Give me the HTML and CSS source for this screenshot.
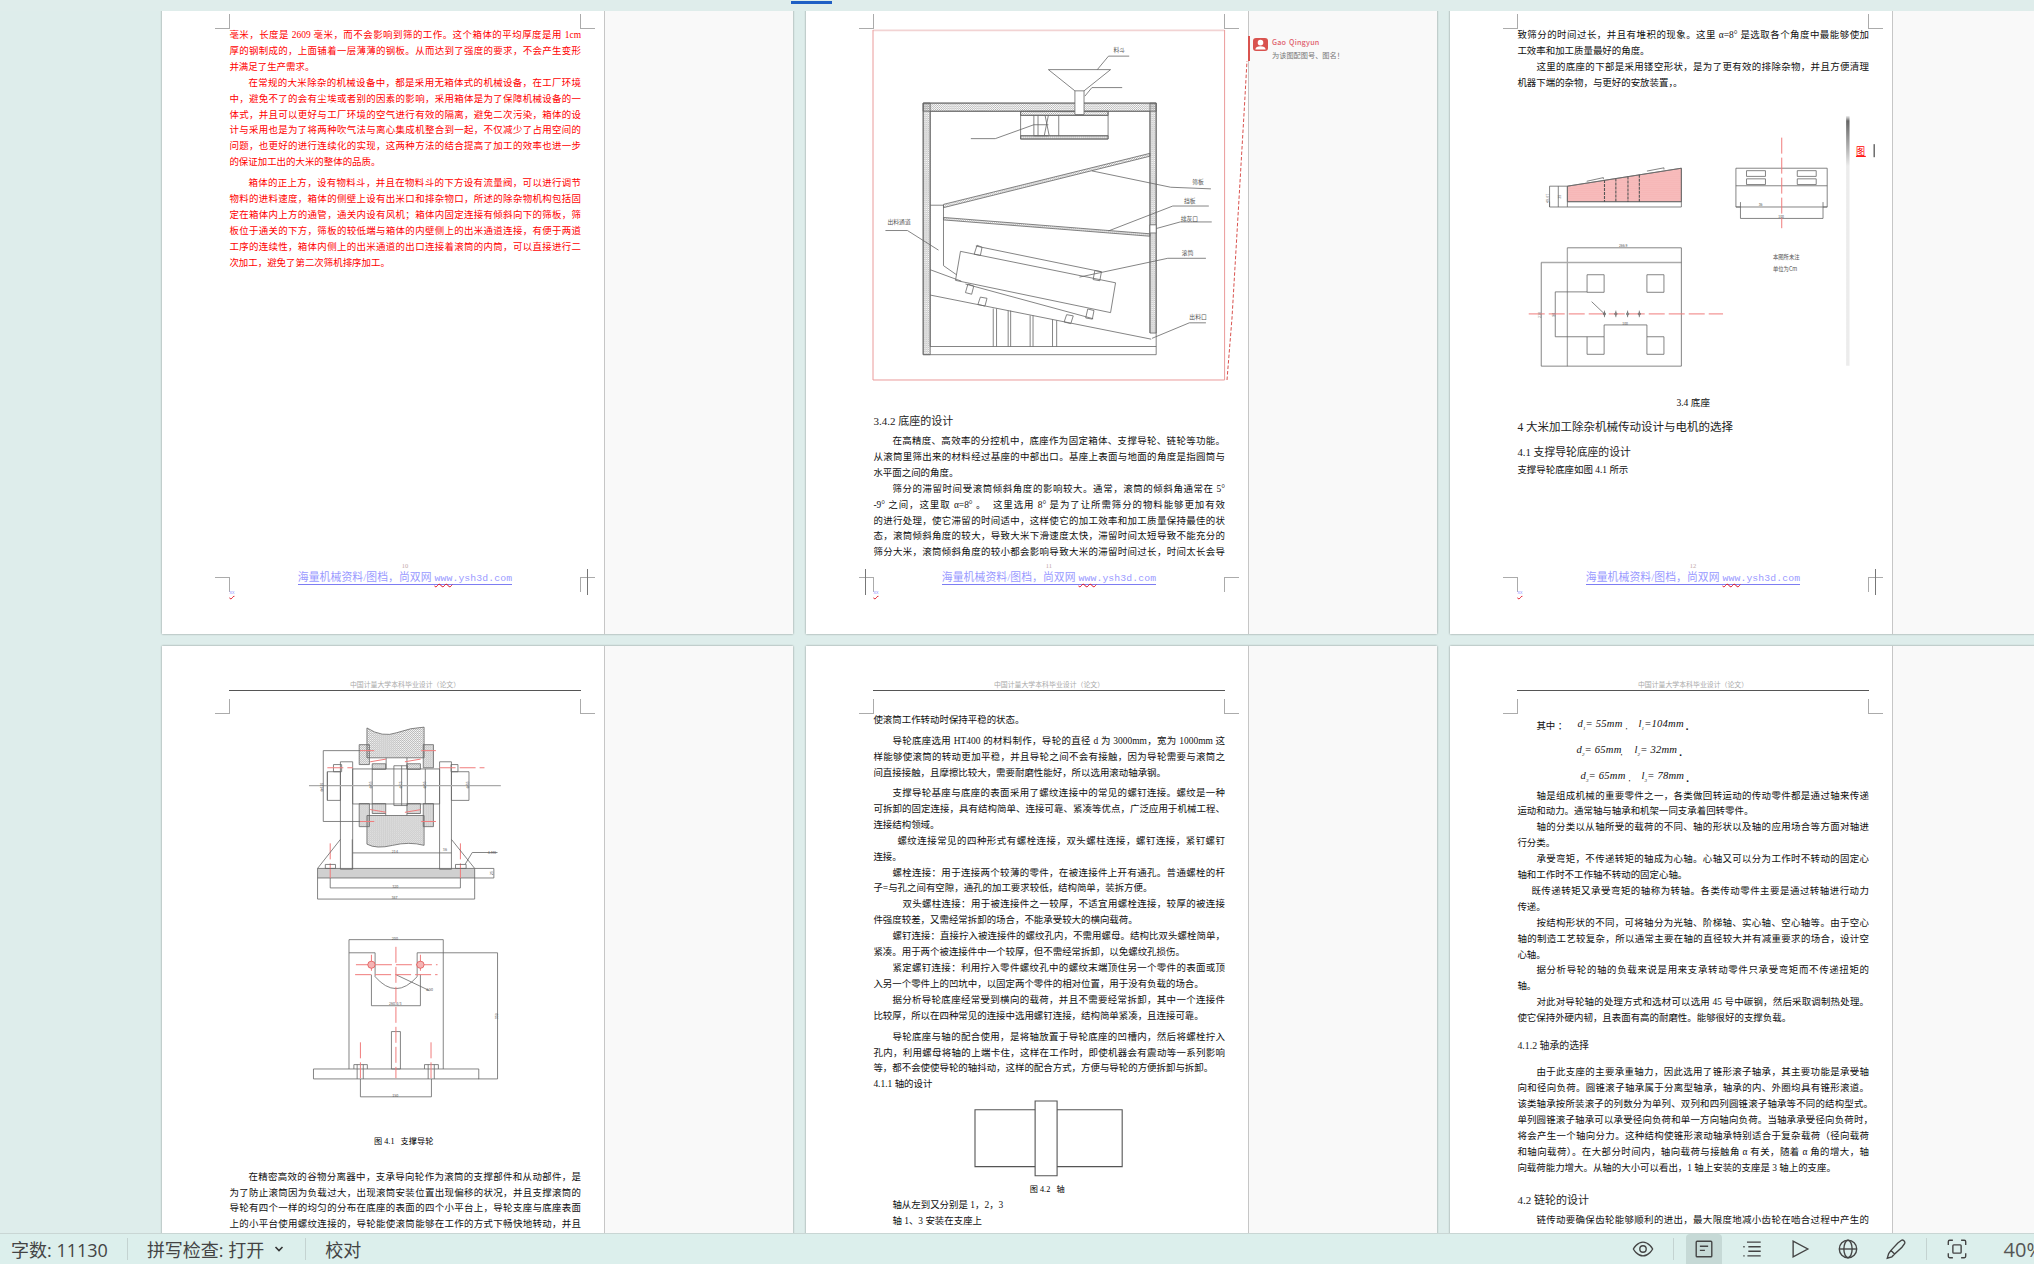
FILE: index.html
```html
<!DOCTYPE html>
<html lang="zh-CN">
<head>
<meta charset="utf-8">
<title>文档</title>
<link rel="stylesheet" href="styles.css">
</head>
<body>
<div class="topbar"><span class="tab-mark"></span></div>
<main class="doc">
<div class="pages">

<!-- PAGE 10 -->
<section class="page">
  <div class="sheet">
    <span class="crop tl"></span><span class="crop tr"></span><span class="crop bl"></span><span class="crop br"></span>
    <span class="caret right"></span>
    <header class="head"></header>
    <div class="body red">
      <p class="para cont"><span class="ln">毫米，长度是 2609 毫米，而不会影响到筛的工作。这个箱体的平均厚度是用 1cm</span><span class="ln">厚的钢制成的，上面铺着一层薄薄的钢板。从而达到了强度的要求，不会产生变形</span><span class="ln">并满足了生产需求。</span></p>
      <p class="para"><span class="ln">在常规的大米除杂的机械设备中，都是采用无箱体式的机械设备，在工厂环境</span><span class="ln">中，避免不了的会有尘埃或者别的因素的影响，采用箱体是为了保障机械设备的一</span><span class="ln">体式，并且可以更好与工厂环境的空气进行有效的隔离，避免二次污染，箱体的设</span><span class="ln">计与采用也是为了将两种吹气法与离心集成机整合到一起，不仅减少了占用空间的</span><span class="ln">问题，也更好的进行连续化的实现，这两种方法的结合提高了加工的效率也进一步</span><span class="ln">的保证加工出的大米的整体的品质。</span></p>
      <p class="para gap5"><span class="ln">箱体的正上方，设有物料斗，并且在物料斗的下方设有流量阀，可以进行调节</span><span class="ln">物料的进料速度，箱体的侧壁上设有出米口和排杂物口，所述的除杂物机构包括固</span><span class="ln">定在箱体内上方的通管，通关内设有风机；箱体内固定连接有倾斜向下的筛板，筛</span><span class="ln">板位于通关的下方，筛板的较低端与箱体的内壁侧上的出米通道连接，有便于两道</span><span class="ln">工序的连续性，箱体内侧上的出米通道的出口连接着滚筒的内筒，可以直接进行二</span><span class="ln">次加工，避免了第二次筛机排序加工。</span></p>
    </div>
    <footer class="foot"><span class="pno">10</span><a class="promo">海量机械资料/图档，尚双网 <span class="promo-url"><span class="wavy">www</span>.ysh3d.com</span></a><span class="mark">xx</span></footer>
  </div>
  <aside class="pane"></aside>
</section>

<!-- PAGE 11 -->
<section class="page">
  <div class="sheet">
    <span class="crop tl"></span><span class="crop tr"></span><span class="crop bl"></span><span class="crop br"></span>
    <span class="caret left"></span>
    <header class="head"></header>
    <div class="body">
      <svg class="drawing fig-machine" viewBox="177 73 848 857" preserveAspectRatio="none">
        <defs><pattern id="hm" width="5" height="5" patternUnits="userSpaceOnUse"><path d="M0 5L5 0M0 0L5 5" stroke="#777"/></pattern></defs>
        <path class="sel-t" d="M177 74H1025"/><path class="sel" d="M177 73V930H1025V73"/>
        <g fill="url(#hm)"><rect x="298" y="252" width="17" height="616"/><rect x="845" y="252" width="15" height="563"/><rect x="298" y="252" width="562" height="20"/><rect x="533" y="272" width="211" height="10"/><rect x="533" y="332" width="211" height="8"/><path d="M347 500L845 375V382L347 508Z"/><path d="M347 532L845 572V578L347 538Z"/></g>
        <path d="M298 252H860V815M298 252V868H860V815M315 272V848M845 272V815M315 272H664M686 272H845M315 848H860"/>
        <path d="M533 272V340H744V272M533 282H744M533 332H744M565 282V332M575 282V332M625 282V332M600 282L590 332M592 282L602 332M565 305H600M565 332H600"/>
        <path class="white" d="M600 170H750L686 222V280H664V222Z"/>
        <path d="M664 222H686M718 170L745 137H795M688 235L705 214H778M413 339H472L565 305"/>
        <path d="M705 418L895 458L992 462M745 565L900 504H987M850 562L918 543H994"/>
        <path class="white" d="M845 550H860V570H845Z"/>
        <path d="M315 502H347V650L392 682M207 564H260L335 612"/>
        <path class="white" d="M388 615L762 692L750 765L376 686Z"/>
        <path d="M425 602L728 665M400 695L708 780M428 600L421 622L436 625L440 605ZM712 662L708 684L724 687L728 665ZM406 695L400 716L415 720L420 700ZM695 756L690 778L706 781L710 760ZM436 727L430 745L447 749L452 730ZM644 770L638 788L654 792L660 773Z"/>
        <path d="M675 678L888 632H980M315 660L390 688M315 722L848 830M850 828L940 790H980M467 755V848M475 755V848M503 760V848M509 760V848M556 772V848M563 772V848M610 782V848M620 784V848"/>
        <text class="lbl" x="757" y="127">料斗</text><text class="lbl" x="947" y="450">筛板</text><text class="lbl" x="927" y="497">挡板</text><text class="lbl" x="919" y="540">排灰口</text><text class="lbl" x="212" y="547">出料通道</text><text class="lbl" x="922" y="624">滚筒</text><text class="lbl" x="940" y="780">出料口</text>
      </svg>
      <h4 class="h-sm fig-after">3.4.2 底座的设计</h4>
      <p class="para gap-h"><span class="ln">在高精度、高效率的分控机中，底座作为固定箱体、支撑导轮、链轮等功能。</span><span class="ln">从滚筒里筛出来的材料经过基座的中部出口。基座上表面与地面的角度是指圆筒与</span><span class="ln">水平面之间的角度。</span></p>
      <p class="para cut"><span class="ln">筛分的滞留时间受滚筒倾斜角度的影响较大。通常，滚筒的倾斜角通常在 5°</span><span class="ln">-9° 之间，这里取 α=8° 。&nbsp; 这里选用 8° 是为了让所需筛分的物料能够更加有效</span><span class="ln">的进行处理，使它滞留的时间适中，这样使它的加工效率和加工质量保持最佳的状</span><span class="ln">态，滚筒倾斜角度的较大，导致大米下滑速度太快，滞留时间太短导致不能充分的</span><span class="ln">筛分大米，滚筒倾斜角度的较小都会影响导致大米的滞留时间过长，时间太长会导</span></p>
    </div>
    <footer class="foot"><span class="pno">11</span><a class="promo">海量机械资料/图档，尚双网 <span class="promo-url"><span class="wavy">www</span>.ysh3d.com</span></a><span class="mark">xx</span></footer>
    <svg class="leader" viewBox="0 0 30 330"><path d="M6 324L11 262L12 245L17 160L23 58L26 5"/></svg>
  </div>
  <aside class="pane">
    <div class="comment">
      <span class="avatar"><svg viewBox="0 0 16 14"><circle cx="8" cy="5" r="3"/><path d="M2.5 12.5c0-2.6 2.4-3.6 5.5-3.6s5.500 1 5.500 3.600z"/></svg></span>
      <div class="c-text"><b>Gao Qingyun</b><span>为该图配图号、图名！</span></div>
    </div>
  </aside>
</section>

<!-- PAGE 12 -->
<section class="page">
  <div class="sheet">
    <span class="crop tl"></span><span class="crop tr"></span><span class="crop bl"></span><span class="crop br"></span>
    <span class="caret right"></span>
    <header class="head"></header>
    <div class="body">
      <p class="para cont"><span class="ln">致筛分的时间过长，并且有堆积的现象。这里 α=8° 是选取各个角度中最能够使加</span><span class="ln">工效率和加工质量最好的角度。</span></p>
      <p class="para"><span class="ln">这里的底座的下部是采用镂空形状，是为了更有效的排除杂物，并且方便清理</span><span class="ln">机器下端的杂物，与更好的安放装置，。</span></p>
      <svg class="drawing fig-base" viewBox="204 285 960 620" preserveAspectRatio="none">
        <defs>
          <pattern id="hr" width="5" height="5" patternUnits="userSpaceOnUse"><path class="hatch-red" d="M0 5L5 0M0 0L5 5" stroke="#ea5a5a"/></pattern>
          <linearGradient id="sb" x1="0" y1="0" x2="0" y2="1"><stop offset="0" stop-color="#eee"/><stop offset=".02" stop-color="#666"/><stop offset=".14" stop-color="#bbb"/><stop offset=".2" stop-color="#ececec"/><stop offset="1" stop-color="#ececec"/></linearGradient>
        </defs>
        <path fill="url(#hr)" d="M337 457L638 413V495H337Z"/>
        <path d="M290 457H337L638 413V508H290ZM290 495V508M313 457V508M337 457V508M337 495H638M388 445L432 436V440M547 420L592 412V416"/>
        <path class="dark" d="M435 442V496M465 438V496M497 433V496M527 429V496"/>
        <text class="tiny rot" transform="translate(288 498) rotate(-90)">48.07</text><text class="tiny rot" transform="translate(319 488) rotate(-90)">35</text>
        <path d="M782 413H1023V508H782ZM782 456H1023M794 496V536H1012V496M782 508H794M1012 508H1023"/>
        <rect x="810" y="419" width="50" height="14"/><rect x="810" y="439" width="50" height="14"/><rect x="944" y="419" width="50" height="14"/><rect x="944" y="439" width="50" height="14"/>
        <path class="cl" d="M903 338V560"/>
        <text class="tiny" x="842" y="506">36</text><text class="tiny" x="894" y="536">100</text>
        <path class="thick" d="M268 644H638M337 608V898"/>
        <path d="M268 644V898H638V608H337M389 674H434V717H389ZM547 674H592V717H547ZM389 826H434V869H389ZM547 826H592V869H547ZM389 716H305V826H389M434 826V797H547V826"/>
        <path class="cl" d="M235 770H748"/>
        <path d="M401 740L435 770M435 762V778M465 762V778M496 762V778M527 762V778"/>
        <circle cx="435" cy="770" r="3"/><circle cx="465" cy="770" r="3"/><circle cx="496" cy="770" r="3"/><circle cx="527" cy="770" r="3"/>
        <text class="tiny" x="473" y="607">266.9</text><text class="tiny" x="482" y="796">100</text><text class="tiny rot" transform="translate(268 780) rotate(-90)">210</text><text class="tiny rot" transform="translate(304 777) rotate(-90)">80</text>
        <text class="lbl" x="880" y="635">本图所未注</text><text class="lbl" x="880" y="665">单位为Cm</text>
        <rect class="rail" x="1073" y="285" width="9" height="612" fill="url(#sb)"/>
        <text class="red-glyph" x="1099" y="380">图</text><path class="redline" d="M1099 384H1125"/><path class="black" d="M1147 354V386"/>
      </svg>
      <p class="cap-34">3.4 底座</p>
      <h2 class="h-lg">4 大米加工除杂机械传动设计与电机的选择</h2>
      <h3 class="h-md">4.1 支撑导轮底座的设计</h3>
      <p class="para cont gap-2"><span class="ln">支撑导轮底座如图 4.1 所示</span></p>
    </div>
    <footer class="foot"><span class="pno">12</span><a class="promo">海量机械资料/图档，尚双网 <span class="promo-url"><span class="wavy">www</span>.ysh3d.com</span></a><span class="mark">xx</span></footer>
  </div>
  <aside class="pane"></aside>
</section>

<!-- PAGE 13 -->
<section class="page">
  <div class="sheet">
    <span class="crop tl"></span><span class="crop tr"></span><span class="crop bl"></span><span class="crop br"></span>
    <header class="head"><span>中国计量大学本科毕业设计（论文）</span></header>
    <div class="body">
      <svg class="drawing fig-roller" viewBox="169 200 862 960" preserveAspectRatio="none">
        <defs><pattern id="hg" width="5" height="5" patternUnits="userSpaceOnUse"><path class="hatch-dark" d="M0 5L5 0" stroke="#555"/></pattern>
        <pattern id="hd" width="4" height="4" patternUnits="userSpaceOnUse"><path d="M0 4L4 0M0 0L4 4" stroke="#777"/></pattern></defs>
        <g fill="url(#hg)">
          <path d="M507 220Q545 245 580 232T647 218V295H507Z"/><path d="M507 440H647V515Q610 505 570 515T507 512Z"/>
          <rect x="488" y="262" width="25" height="50"/><rect x="645" y="262" width="25" height="58"/><rect x="488" y="410" width="25" height="58"/><rect x="645" y="410" width="25" height="58"/>
          <rect x="520" y="310" width="33" height="14"/><rect x="605" y="310" width="33" height="14"/><rect x="520" y="410" width="33" height="25"/><rect x="605" y="410" width="33" height="25"/>
        </g>
        <rect fill="url(#hd)" x="386" y="573" width="385" height="24"/>
        <path d="M472 323H685V411H472ZM520 323V411M650 323V411M573 315H606V415H573ZM592 315V415M442 305H472V575H442ZM685 305H714V575H685ZM410 330H442V402H410ZM714 330H757V402H714ZM425 312H445V330H425ZM713 312H730V330H713ZM554 295V323M605 295V323M553 435V440M605 435V440"/>
        <path class="thick" d="M365 365H835"/>
        <path class="cl" d="M490 277H525M640 277H676M490 455H525M640 455H676M410 320H472M685 320H795M515 305L555 298M600 305L640 298M515 425L555 432M600 432L640 425M417 510V597M736 510V597"/>
        <path d="M400 277H490M400 277V455H490M410 330V402M442 500L386 573M714 500L771 573M472 534H685M685 534H714M471 500V575M417 597V622H736V597M386 597V650H771V597M771 573H818M771 597H818M818 573V597M748 562L765 533H827M405 563H430V573H405ZM724 563H750V573H724Z"/>
        <text class="tiny" x="568" y="534">214</text><text class="tiny" x="693" y="530">36</text><text class="tiny" x="803" y="536">4-M8</text><text class="tiny" x="569" y="622">320</text><text class="tiny" x="567" y="651">387</text>
        <text class="tiny rot" transform="translate(400 380) rotate(-90)">Φ410</text><text class="tiny rot" transform="translate(519 372) rotate(-90)">Φ65</text><text class="tiny rot" transform="translate(592 372) rotate(-90)">Φ75</text><text class="tiny rot" transform="translate(652 372) rotate(-90)">Φ65</text><text class="tiny rot" transform="translate(756 372) rotate(-90)">Φ55</text><text class="tiny rot" transform="translate(817 590) rotate(-90)">25</text>
        <path d="M463 1077V752H694V1077M463 785H527V845Q578 905 630 845V785H827V1102H780M518 840V918H638V840M376 1077H781V1102H376ZM567 983H589V1077H567ZM475 1077V1066H508V1077M648 1077V1066H682V1077M483 1066V1102M498 1066V1102M657 1066V1102M672 1066V1102M491 1102V1147H665V1102M578 840L660 880"/>
        <path class="cl" d="M578 770V1100M480 815H680M478 840H680M491 1010V1100M664 1010V1100M518 790V835M638 790V835"/>
        <circle class="bolt" cx="518" cy="815" r="9"/><circle class="bolt" cx="638" cy="815" r="9"/>
        <text class="tiny" x="568" y="752">200</text><text class="tiny" x="652" y="882">Φ50</text><text class="tiny" x="561" y="917">260.4/3</text><text class="tiny" x="569" y="1148">150</text><text class="tiny rot" transform="translate(827 952) rotate(-90)">350</text>
      </svg>
      <p class="cap cap-41">图 4.1 &nbsp;&nbsp;支撑导轮</p>
      <p class="para cut gap-28"><span class="ln">在精密高效的谷物分离器中，支承导向轮作为滚筒的支撑部件和从动部件，是</span><span class="ln">为了防止滚筒因为负载过大，出现滚筒安装位置出现偏移的状况，并且支撑滚筒的</span><span class="ln">导轮有四个一样的均匀的分布在底座的表面的四个小平台上，导轮支座与底座表面</span><span class="ln">上的小平台使用螺纹连接的，导轮能使滚筒能够在工作的方式下畅快地转动，并且</span></p>
    </div>
    <footer class="foot"></footer>
  </div>
  <aside class="pane"></aside>
</section>

<!-- PAGE 14 -->
<section class="page">
  <div class="sheet">
    <span class="crop tl"></span><span class="crop tr"></span><span class="crop bl"></span><span class="crop br"></span>
    <header class="head"><span>中国计量大学本科毕业设计（论文）</span></header>
    <div class="body">
      <p class="para cont"><span class="ln">使滚筒工作转动时保持平稳的状态。</span></p>
      <p class="para gap5"><span class="ln">导轮底座选用 HT400 的材料制作，导轮的直径 d 为 3000mm，宽为 1000mm 这</span><span class="ln">样能够使滚筒的转动更加平稳，并且导轮之间不会有接触，因为导轮需要与滚筒之</span><span class="ln">间直接接触，且摩擦比较大，需要耐磨性能好，所以选用滚动轴承钢。</span></p>
      <p class="para gap4"><span class="ln">支撑导轮基座与底座的表面采用了螺纹连接中的常见的螺钉连接。螺纹是一种</span><span class="ln">可拆卸的固定连接，具有结构简单、连接可靠、紧凑等优点，广泛应用于机械工程、</span><span class="ln">连接结构领域。</span></p>
      <p class="para ind24"><span class="ln">螺纹连接常见的四种形式有螺栓连接，双头螺柱连接，螺钉连接，紧钉螺钉</span><span class="ln">连接。</span></p>
      <p class="para"><span class="ln">螺栓连接：用于连接两个较薄的零件，在被连接件上开有通孔。普通螺栓的杆</span><span class="ln">子=与孔之间有空隙，通孔的加工要求较低，结构简单，装拆方便。</span></p>
      <p class="para ind29"><span class="ln">双头螺柱连接：用于被连接件之一较厚，不适宜用螺栓连接，较厚的被连接</span><span class="ln">件强度较差，又需经常拆卸的场合，不能承受较大的横向载荷。</span></p>
      <p class="para"><span class="ln">螺钉连接：直接拧入被连接件的螺纹孔内，不需用螺母。结构比双头螺栓简单，</span><span class="ln">紧凑。用于两个被连接件中一个较厚，但不需经常拆卸，以免螺纹孔损伤。</span></p>
      <p class="para"><span class="ln">紧定螺钉连接：利用拧入零件螺纹孔中的螺纹末端顶住另一个零件的表面或顶</span><span class="ln">入另一个零件上的凹坑中，以固定两个零件的相对位置，用于没有负载的场合。</span></p>
      <p class="para"><span class="ln">据分析导轮底座经常受到横向的载荷，并且不需要经常拆卸，其中一个连接件</span><span class="ln">比较厚，所以在四种常见的连接中选用螺钉连接，结构简单紧凑，且连接可靠。</span></p>
      <p class="para gap5"><span class="ln">导轮底座与轴的配合使用，是将轴放置于导轮底座的凹槽内，然后将螺栓拧入</span><span class="ln">孔内，利用螺母将轴的上端卡住，这样在工作时，即使机器会有震动等一系列影响</span><span class="ln">等，都不会使使导轮的轴抖动，这样的配合方式，方便与导轮的方便拆卸与拆卸。</span></p>
      <p class="para cont"><span class="ln">4.1.1 轴的设计</span></p>
      <svg class="drawing fig-shaft" viewBox="177 1150 848 200" preserveAspectRatio="none">
        <path class="mid" d="M423 1177H778V1320H423Z"/><path class="white mid" d="M568 1155H621V1343H568Z"/>
      </svg>
      <p class="cap cap-42">图 4.2 &nbsp;&nbsp;轴</p>
      <p class="para"><span class="ln">轴从左到又分别是 1，2，3</span></p>
      <p class="para"><span class="ln">轴 1、3 安装在支座上</span></p>
    </div>
    <footer class="foot"></footer>
  </div>
  <aside class="pane"></aside>
</section>

<!-- PAGE 15 -->
<section class="page">
  <div class="sheet">
    <span class="crop tl"></span><span class="crop tr"></span><span class="crop bl"></span><span class="crop br"></span>
    <header class="head"><span>中国计量大学本科毕业设计（论文）</span></header>
    <div class="body">
      <div class="eq eq-1"><span class="eq-lead">其中 ：</span><i>d<sub>1</sub>= 55mm</i><span class="sep">,</span><i>l<sub>1</sub>=104mm</i><span class="end">.</span></div>
      <div class="eq eq-2"><span class="eq-lead"></span><i>d<sub>2</sub>= 65mm</i><span class="sep">,</span><i>l<sub>2</sub>= 32mm</i><span class="end">.</span></div>
      <div class="eq eq-3"><span class="eq-lead"></span><i>d<sub>3</sub>= 65mm</i><span class="sep">,</span><i>l<sub>3</sub>= 78mm</i><span class="end">.</span></div>
      <p class="para gap-2"><span class="ln">轴是组成机械的重要零件之一，各类做回转运动的传动零件都是通过轴来传递</span><span class="ln">运动和动力。通常轴与轴承和机架一同支承着回转零件。</span></p>
      <p class="para"><span class="ln">轴的分类以从轴所受的载荷的不同、轴的形状以及轴的应用场合等方面对轴进</span><span class="ln">行分类。</span></p>
      <p class="para"><span class="ln">承受弯矩，不传递转矩的轴成为心轴。心轴又可以分为工作时不转动的固定心</span><span class="ln">轴和工作时不工作轴不转动的固定心轴。</span></p>
      <p class="para ind14"><span class="ln">既传递转矩又承受弯矩的轴称为转轴。各类传动零件主要是通过转轴进行动力</span><span class="ln">传递。</span></p>
      <p class="para"><span class="ln">按结构形状的不同，可将轴分为光轴、阶梯轴、实心轴、空心轴等。由于空心</span><span class="ln">轴的制造工艺较复杂，所以通常主要在轴的直径较大并有减重要求的场合，设计空</span><span class="ln">心轴。</span></p>
      <p class="para"><span class="ln">据分析导轮的轴的负载来说是用来支承转动零件只承受弯矩而不传递扭矩的</span><span class="ln">轴。</span></p>
      <p class="para"><span class="ln">对此对导轮轴的处理方式和选材可以选用 45 号中碳钢，然后采取调制热处理。</span><span class="ln">使它保持外硬内韧，且表面有高的耐磨性。能够很好的支撑负载。</span></p>
      <h4 class="h-xs">4.1.2 轴承的选择</h4>
      <p class="para gap-11"><span class="ln">由于此支座的主要承重轴力，因此选用了锥形滚子轴承，其主要功能是承受轴</span><span class="ln">向和径向负荷。圆锥滚子轴承属于分离型轴承，轴承的内、外圈均具有锥形滚道。</span><span class="ln wide">该类轴承按所装滚子的列数分为单列、双列和四列圆锥滚子轴承等不同的结构型式。</span><span class="ln wide">单列圆锥滚子轴承可以承受径向负荷和单一方向轴向负荷。当轴承承受径向负荷时，</span><span class="ln">将会产生一个轴向分力。这种结构使锥形滚动轴承特别适合于复杂载荷（径向载荷</span><span class="ln">和轴向载荷）。在大部分时间内，轴向载荷与接触角 α 有关，随着 α 角的增大，轴</span><span class="ln">向载荷能力增大。从轴的大小可以看出，1 轴上安装的支座是 3 轴上的支座。</span></p>
      <h3 class="h-sm gap-16">4.2 链轮的设计</h3>
      <p class="para cut gap5"><span class="ln">链传动要确保齿轮能够顺利的进出，最大限度地减小齿轮在啮合过程中产生的</span></p>
    </div>
    <footer class="foot"></footer>
  </div>
  <aside class="pane"></aside>
</section>

</div>
</main>

<footer class="status">
  <div class="st-left">
    <span>字数: 11130</span>
    <span class="vsep"></span>
    <span class="st-drop">拼写检查: 打开<svg class="chev" viewBox="0 0 10 6"><path d="M1.500 1L5 4.500L8.500 1"/></svg></span>
    <span class="vsep"></span>
    <span>校对</span>
  </div>
  <div class="st-right">
    <span class="ico"><svg viewBox="0 0 24 24"><path d="M1.500 12S5.500 4.500 12 4.500 22.500 12 22.500 12 18.500 19.500 12 19.500 1.500 12 1.500 12Z"/><circle cx="12" cy="12" r="3.500"/></svg></span>
    <span class="vsep"></span>
    <span class="ico active"><svg viewBox="0 0 24 24"><rect x="3.500" y="3.500" width="17" height="17" rx="1"/><path d="M7.500 9H16.500M7.500 13.500H13"/></svg></span>
    <span class="ico"><svg viewBox="0 0 24 24"><path d="M6.500 4.500H21.500M2.500 9.500H4M8 9.500H21.500M8 14.500H21.500M2.500 19.500H4M7 19.500H21.500"/></svg></span>
    <span class="ico"><svg viewBox="0 0 24 24"><path d="M4.500 3.500V20.500L20.500 12Z"/></svg></span>
    <span class="ico"><svg viewBox="0 0 24 24"><circle cx="12" cy="12" r="9.500"/><ellipse cx="12" cy="12" rx="4.500" ry="9.500"/><path d="M2.500 12H21.500"/></svg></span>
    <span class="ico"><svg viewBox="0 0 24 24"><path d="M14 5.500L18 2.500C19.500 1.500 22.500 4 21.500 6L18.500 10L10.500 17.500L6.500 13.500ZM6.500 13.500L4 17L2.500 22L7.500 20.500L10.500 17.500"/></svg></span>
    <span class="vsep"></span>
    <span class="ico"><svg viewBox="0 0 24 24"><path d="M2.500 7.500V4A1.500 1.500 0 0 1 4 2.500H7.500M16.500 2.500H20A1.500 1.500 0 0 1 21.500 4V7.500M21.500 16.500V20A1.500 1.500 0 0 1 20 21.500H16.500M7.500 21.500H4A1.500 1.500 0 0 1 2.500 20V16.500"/><rect x="7.500" y="7.500" width="9" height="9" rx="1"/></svg></span>
    <span class="zoom-val">40%</span>
  </div>
</footer>
</body>
</html>
```
FILE: styles.css
```css
* { box-sizing: border-box; }
html, body { margin: 0; height: 100%; }
body {
  display: flex;
  flex-direction: column;
  height: 100vh;
  overflow: hidden;
  background: #deedeb;
  font-family: "Liberation Serif", "Noto Sans CJK SC", serif;
  color: #0f0f0f;
}

.topbar { height: 11px; flex: none; padding: 1px 0 0 791px; background: #dfedeb; position: relative; z-index: 2; }
.tab-mark { display: block; width: 41px; height: 3px; background: #1f5fc4; }

.doc { flex: 1; min-height: 0; overflow: hidden; }
.pages {
  display: grid;
  grid-template-columns: repeat(3, 631px);
  grid-auto-rows: 673px;
  gap: 12px 13px;
  margin: -50px 0 0 162px;
  width: max-content;
}

.page { display: flex; height: 673px; box-shadow: 0 0 2px rgba(0, 0, 0, .4); background: #fff; }
.sheet { width: 442px; flex: none; position: relative; display: flex; flex-direction: column; background: #fff; }
.pane { flex: 1; background: #f9f9f9; border-left: 1px solid #c6c6c6; padding-top: 75px; }

.head { height: 67px; flex: none; margin: 0 23px 0 67px; padding-top: 33px; position: relative; font-size: 6.9px; line-height: 11px; text-align: center; color: #a9a9a9; }
.head::after { content: ""; position: absolute; left: 0; right: 0; top: 44px; border-top: 1px solid #555; }

.body { height: 533px; flex: none; margin: 0 23px 0 67.4px; font-size: 9.45px; line-height: 15.9px; }
.foot { flex: 1; position: relative; display: flex; flex-direction: column; align-items: center; padding-left: 44px; }

.red { color: #f00; }

.para { margin: 0; }
.ln { display: block; text-align: justify; text-align-last: justify; }
.ln:last-child { text-align-last: left; }
.para .ln:first-child { padding-left: 19px; }
.para.cont .ln:first-child { padding-left: 0; }
.para.cut .ln:last-child { text-align-last: justify; }
.para.ind24 .ln:first-child { padding-left: 24px; }
.para.ind29 .ln:first-child { padding-left: 29px; }
.para.ind14 .ln:first-child { padding-left: 14px; }
.ln.wide { margin-right: -4px; }

.gap-2 { margin-top: 2px; }
.gap4 { margin-top: 4.4px; }
.gap5 { margin-top: 5px; }
.gap-11 { margin-top: 11px; }
.gap-h { margin-top: 4.6px; }
.gap-28 { margin-top: 20px; }

.h-sm { margin: 0; font-weight: 400; font-size: 11px; line-height: 16px; color: #222; }
.h-sm.gap-16 { margin-top: 15.75px; }
.h-xs { margin: 11.4px 0 0; font-weight: 400; font-size: 9.9px; line-height: 15.9px; color: #222; }
.h-md { margin: 6.7px 0 0; font-weight: 400; font-size: 10.8px; line-height: 17px; color: #222; }
.h-lg { margin: 6.1px 0 0; font-weight: 400; font-size: 11.5px; line-height: 20px; color: #222; }
.h-sm.fig-after { margin-top: 33px; }

.cap { margin: 0; text-align: center; font-size: 8.2px; line-height: 16px; color: #000; }
.cap-41 { margin-top: 32px; padding-right: 3px; }
.cap-42 { margin-top: 3px; padding-right: 4px; }
.cap-34 { margin: 26.3px 0 0; text-align: center; font-size: 9.6px; line-height: 15.9px; }

.drawing { display: block; overflow: visible; fill: none; stroke: #666; }
.drawing * { vector-effect: non-scaling-stroke; stroke-width: .8px; }
.drawing pattern path { vector-effect: none; stroke-width: .7px; }
.drawing pattern .hatch-red { stroke-width: 1px; }
.drawing pattern .hatch-dark { stroke-width: 1.1px; }
.drawing text { stroke: none; fill: #555; font-family: "Noto Sans CJK SC", sans-serif; }
.drawing .lbl { font-size: 14px; }
.drawing .tiny { font-size: 9px; }
.drawing .white { fill: #fff; }
.drawing .thick { stroke: #aaa; stroke-width: 1.3px; }
.drawing .mid { stroke: #555; stroke-width: 1.1px; }
.drawing .dark { stroke: #555; stroke-width: 1.1px; stroke-dasharray: 3 1; }
.drawing .cl { stroke: #f07c7c; stroke-dasharray: 16 4; stroke-width: 1px; }
.drawing .sel { stroke: #ea9a9a; stroke-width: 1px; }
.drawing .sel-t { stroke: #f2d3d3; stroke-width: 1.6px; }
.drawing .bolt { stroke: #e05555; fill: #f5b3b3; }
.drawing .rail { stroke: none; }
.drawing .red-glyph { fill: #f00; font-size: 24px; }
.drawing .redline { stroke: #f00; stroke-width: 1px; }
.drawing .black { stroke: #222; stroke-width: 1px; }

.fig-machine { width: 351.6px; height: 350px; margin-top: 2.4px; }
.fig-base { width: 363.6px; height: 253px; margin-top: 24.5px; }
.fig-roller { width: 351.8px; height: 382px; margin: 6.6px 0 0 0; }
.fig-shaft { width: 351.6px; height: 79.6px; margin-top: 6px; }

.eq { display: flex; align-items: center; height: 22px; font-size: 10.6px; }
.eq i { font-style: italic; white-space: nowrap; letter-spacing: .2px; flex: none; }
.eq sub { font-size: 5px; line-height: 0; }
.eq-lead { padding-left: 19px; font-size: 9.45px; padding-top: 5px; flex: none; }
.eq-1 .eq-lead { width: 60px; }
.eq-2 { margin-top: 3.5px; }
.eq-2 .eq-lead { width: 59px; }
.eq-3 { margin-top: 4px; }
.eq-3 .eq-lead { width: 63px; }
.eq i:nth-of-type(1) { width: 42px; }
.sep { width: 19px; flex: none; padding: 6px 0 0 6px; font-size: 8px; }
.eq-2 .sep { width: 16px; padding-left: 2px; }
.end { padding: 6px 0 0 2px; font-weight: 700; }

.crop { position: absolute; width: 14.5px; height: 14.5px; border: 0 solid #ababab; }
.crop.tl { left: 53px; top: 53px; border-width: 0 1px 1px 0; }
.crop.tr { left: 418px; top: 53px; border-width: 0 0 1px 1px; }
.crop.bl { left: 53px; top: 616px; border-width: 1px 1px 0 0; }
.crop.br { left: 418px; top: 616px; border-width: 1px 0 0 1px; }

.caret { position: absolute; top: 608px; width: 1px; height: 26px; background: #777; }
.caret.right { left: 425px; }
.caret.left { left: 59px; }

.pno { height: 8px; line-height: 8px; font-size: 6.5px; color: #c2a9a9; margin-top: 1px; }
.promo { margin-top: 1px; height: 14px; line-height: 12px; border-bottom: 1px solid #7d7df2; color: #9a9aff; font-size: 10.8px; white-space: nowrap; letter-spacing: .1px; }
.promo-url { font-family: "Liberation Mono", monospace; font-size: 9.8px; }
.wavy { text-decoration: underline wavy #e01020 1px; text-underline-offset: 2px; }
.mark { position: absolute; left: 67.4px; top: 28px; font-family: "Liberation Sans", sans-serif; font-size: 5px; line-height: 6px; color: #9a9aff; text-decoration: underline wavy #e01020 1px; text-underline-offset: 1px; }

.leader { position: absolute; left: 415px; top: 95px; width: 30px; height: 330px; fill: none; }
.leader path { stroke: #d9534f; stroke-width: 1px; stroke-dasharray: 3.5 2; fill: none; }

.comment { display: flex; gap: 4px; height: 25px; margin-left: -1px; padding: 2px 0 0 3px; border-left: 2px solid #d9534f; }
.avatar { width: 15px; height: 13px; border-radius: 3px; background: #d9534f; display: block; flex: none; }
.avatar svg { display: block; width: 15px; height: 13px; fill: #fff; }
.c-text { display: flex; flex-direction: column; font-family: "Noto Sans CJK SC", sans-serif; }
.c-text b { font-size: 7.2px; line-height: 9px; font-weight: 500; color: #e0606c; letter-spacing: .2px; word-spacing: 1px; }
.c-text span { margin-top: 2.5px; font-size: 7.2px; line-height: 10px; color: #777; }

.status {
  height: 31px;
  flex: none;
  display: flex;
  justify-content: space-between;
  align-items: stretch;
  background: #dcefec;
  border-top: 1px solid #c9d6d4;
  font-family: "Open Sans", "Noto Sans CJK SC", sans-serif;
  font-size: 18px;
  color: #444;
  position: relative;
  z-index: 2;
}
.st-left { display: flex; align-items: center; gap: 19px; padding-left: 11px; }
.st-right { display: flex; align-items: center; gap: 12px; margin-right: -9px; flex: none; }
.st-drop { display: flex; align-items: center; gap: 10px; }
.vsep { width: 1px; height: 22px; background: #c4d3d1; flex: none; }
.chev { width: 10px; height: 6px; fill: none; stroke: #333; stroke-width: 1.6px; margin-right: 2px; }
.ico { width: 36px; height: 30px; display: flex; align-items: center; justify-content: center; flex: none; }
.ico svg { width: 22px; height: 22px; fill: none; stroke: #444; stroke-width: 1.5px; }
.ico.active { background: #c6d9d6; border-radius: 4px 4px 0 0; }
.zoom-val { margin-left: 17px; white-space: nowrap; color: #555; font-size: 20px; }
```
